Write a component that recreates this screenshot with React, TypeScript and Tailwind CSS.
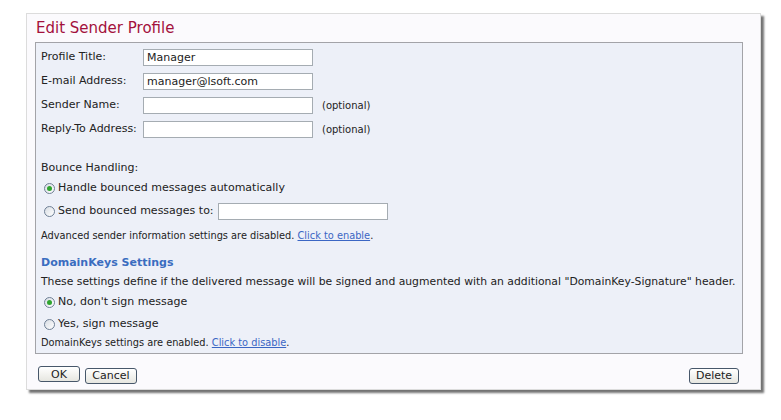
const font = "font-['DejaVu_Sans',Verdana,sans-serif]";

function TextInput({ value = "", width = "w-[170px]" }: { value?: string; width?: string }) {
  return (
    <div className={`${width} h-[17px] border border-[#a5acb2] bg-white px-[3px] text-[11px] leading-[15px] text-[#222]`}>
      {value}
    </div>
  );
}

function Radio({ checked }: { checked?: boolean }) {
  return (
    <span className="ml-[3px] mr-[3px] flex h-[11px] w-[11px] items-center justify-center rounded-full border border-[#6e7f95] bg-[linear-gradient(135deg,#d8dde4,#ffffff)]">
      {checked && <span className="h-[5px] w-[5px] rounded-full bg-[#2fa52f]" />}
    </span>
  );
}

function Btn({ label, w }: { label: string; w: string }) {
  return (
    <button className={`${w} h-[16px] rounded-[3px] border border-[#47576a] bg-[linear-gradient(#ffffff,#e6e6e0)] text-[11px] leading-[13px] text-[#222]`}>
      {label}
    </button>
  );
}

const fields = [
  { label: "Profile Title:", value: "Manager", optional: false },
  { label: "E-mail Address:", value: "manager@lsoft.com", optional: false },
  { label: "Sender Name:", value: "", optional: true },
  { label: "Reply-To Address:", value: "", optional: true },
];

export default function App() {
  return (
    <div className={`h-[420px] w-[781px] bg-white pl-[26px] pt-[13px] ${font}`}>
      <div className="flex h-[377px] w-[735px] flex-col border border-[#dcdcdc] bg-[#fbfafd] pl-[8px] pr-[17px] shadow-[3px_3px_2px_rgba(0,0,0,0.55)]">
        <div className="flex h-[28px] items-center pl-[1px] text-[15px] text-[#a3113c]">Edit Sender Profile</div>

        {/* main settings panel */}
        <div className="flex flex-col border border-[#a3a3a8] bg-[#edf0f8] pb-[3px] pl-[5px] pt-[2px] text-[11px] text-[#222]">
          {fields.map((f) => (
            <div key={f.label} className="flex h-[24px] items-center">
              <span className="w-[102px]">{f.label}</span>
              <TextInput value={f.value} />
              {f.optional && <span className="ml-[9px] text-[10px]">(optional)</span>}
            </div>
          ))}

          <div className="mt-[17px] flex h-[20px] items-center">Bounce Handling:</div>
          <div className="flex h-[20px] items-center">
            <Radio checked />
            <span>Handle bounced messages automatically</span>
          </div>
          <div className="flex h-[26px] items-center">
            <Radio />
            <span className="mr-[4px]">Send bounced messages to:</span>
            <TextInput />
          </div>
          <div className="flex h-[24px] items-center text-[9.8px]">
            Advanced sender information settings are disabled.&nbsp;
            <a className="text-[#3b66c4] underline">Click to enable</a>.
          </div>

          <div className="mt-[6px] flex h-[18px] items-center text-[11px] font-bold text-[#3a6dc0]">DomainKeys Settings</div>
          <div className="flex h-[20px] items-center whitespace-nowrap text-[10.8px]">
            These settings define if the delivered message will be signed and augmented with an additional "DomainKey-Signature" header.
          </div>
          <div className="flex h-[20px] items-center">
            <Radio checked />
            <span>No, don't sign message</span>
          </div>
          <div className="flex h-[24px] items-center">
            <Radio />
            <span>Yes, sign message</span>
          </div>
          <div className="flex h-[14px] items-center text-[9.8px]">
            DomainKeys settings are enabled.&nbsp;
            <a className="text-[#3b66c4] underline">Click to disable</a>.
          </div>
        </div>

        <div className="mt-[8px] flex items-center pl-[3px] pr-[4px]">
          <Btn label="OK" w="w-[42px]" />
          <span className="ml-[5px]">
            <Btn label="Cancel" w="w-[52px]" />
          </span>
          <span className="ml-auto">
            <Btn label="Delete" w="w-[50px]" />
          </span>
        </div>
      </div>
    </div>
  );
}
